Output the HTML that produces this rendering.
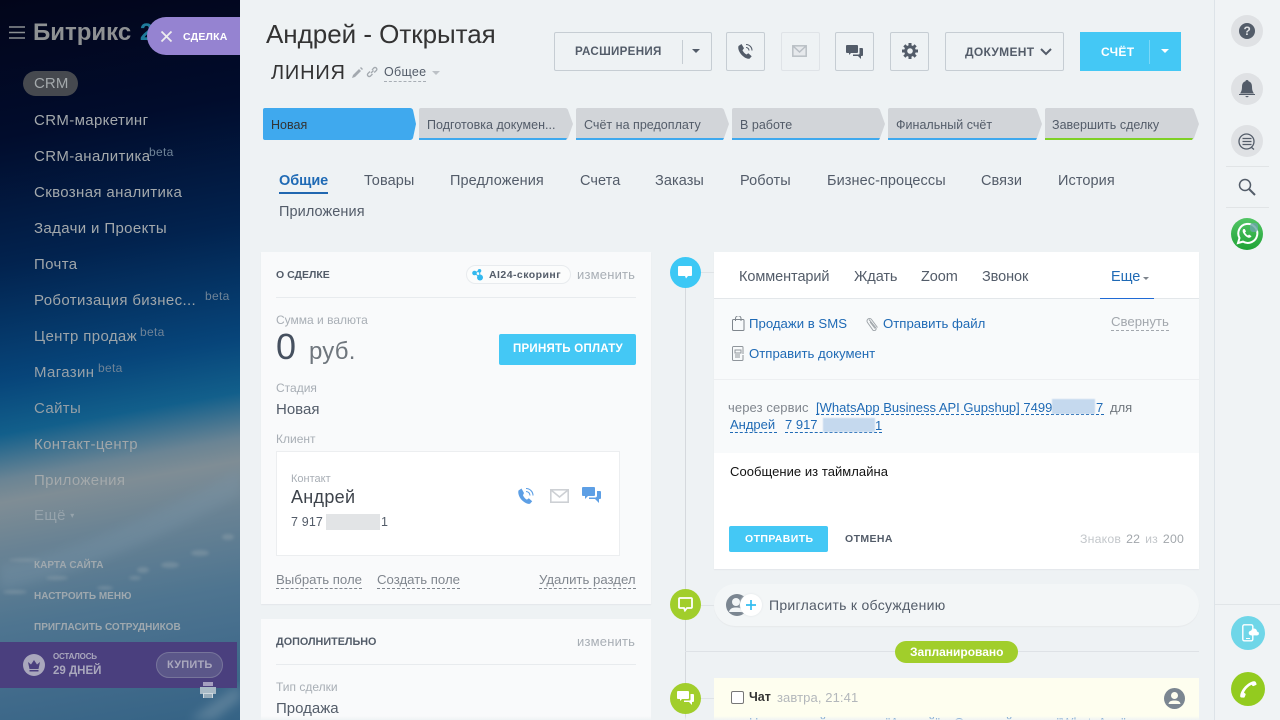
<!DOCTYPE html>
<html lang="ru"><head><meta charset="utf-8"><title>Сделка</title>
<style>
html,body{margin:0;padding:0;width:1280px;height:720px;overflow:hidden;background:#eef2f4;font-family:"Liberation Sans","DejaVu Sans",sans-serif}
*{box-sizing:border-box}
#w{position:absolute;left:0;top:0;width:1280px;height:720px;overflow:hidden;background:#eef2f4}
.a,.t{position:absolute;white-space:nowrap}
.t{line-height:1}
.side{position:absolute;left:0;top:0;width:240px;height:720px;overflow:hidden;background:linear-gradient(170deg,#02051a 0%,#010c2c 18%,#02234f 35%,#07457a 50%,#125f8b 57%,#6a8494 63%,#7f8d95 66%,#6a8394 72%,#4f7590 82%,#436c8c 90%,#356385 100%)}
.m{position:absolute;left:34px;font-size:15px;color:#a4a9ac;letter-spacing:.36px;line-height:18px;white-space:nowrap}
.b{position:absolute;font-size:12px;color:#6f8397;letter-spacing:.3px;line-height:14px}
.sm{position:absolute;left:34px;font-size:10px;font-weight:bold;color:#9fa8ae;letter-spacing:0;line-height:12px;white-space:nowrap}
.btn{position:absolute;top:32px;height:39px;border:1px solid #c6cdd3;border-radius:2px}
.stt{position:absolute;top:117px;font-size:12.5px;color:#535c69;letter-spacing:.02px;white-space:nowrap;line-height:16px}
.tab{position:absolute;font-size:14.5px;color:#535c69;line-height:18px;letter-spacing:.08px;white-space:nowrap}
.lab{position:absolute;font-size:12px;color:#a8aeb5;line-height:14px;white-space:nowrap}
.val{position:absolute;font-size:15px;color:#535c69;line-height:18px;white-space:nowrap}
.dash{position:absolute;font-size:13.2px;color:#80868e;line-height:15px;padding-bottom:1px;border-bottom:1px dashed #80868e;white-space:nowrap}
.lnk{position:absolute;font-size:13.2px;color:#1f6ab5;line-height:15px;white-space:nowrap}
.dl{border-bottom:1px dashed #1f6ab5;padding-bottom:0}
.r{position:absolute;left:1231px;width:32px;height:32px;border-radius:50%;background:#dfe1e4}
.dot{position:absolute;left:670px;width:31px;height:31px;border-radius:50%}
</style></head><body><div id="w">

<div class="side">
  <svg class="a" style="left:0;top:400px" width="240" height="320" viewBox="0 0 240 320">
    <defs><filter id="f"><feGaussianBlur stdDeviation="5"/></filter><filter id="g"><feGaussianBlur stdDeviation="1.500"/></filter></defs>
    <path d="M0 165 Q90 150 240 70 L240 95 Q100 170 0 190Z" fill="#7d98ab" opacity=".3" filter="url(#f)"/>
    <g fill="#a8b3b8" opacity=".3" filter="url(#g)">
      <ellipse cx="228" cy="137" rx="6" ry="3"/><ellipse cx="200" cy="153" rx="9" ry="3"/><ellipse cx="170" cy="165" rx="9" ry="3"/><ellipse cx="143" cy="170" rx="6" ry="3"/><ellipse cx="135" cy="178" rx="6" ry="2"/><ellipse cx="57" cy="178" rx="11" ry="2"/><ellipse cx="15" cy="192" rx="12" ry="2"/><ellipse cx="105" cy="188" rx="8" ry="2"/><ellipse cx="25" cy="160" rx="16" ry="1.500"/>
    </g>
    <path d="M190 320 Q215 300 240 285 L240 300 Q225 310 215 320Z" fill="#8ea6b5" opacity=".4" filter="url(#f)"/>
  </svg>
  <svg class="a" style="left:9px;top:26px" width="16" height="13"><path d="M0 1h16M0 6.500h16M0 12h16" stroke="#8b8f92" stroke-width="1.600"/></svg>
  <div class="t" style="left:33px;top:21px;font-size:24px;font-weight:bold;color:#8e9193">Битрикс <span style="color:#1e7b9b;margin-left:2px">24</span></div>
  <div class="a" style="left:23px;top:71px;width:55px;height:25px;border-radius:13px;background:#46494f"></div>
  <div class="m" style="top:75px;left:34px;letter-spacing:.1px">CRM</div>
  <div class="m" style="top:112px">CRM-маркетинг</div>
  <div class="m" style="top:148px">CRM-аналитика</div><div class="b" style="left:149px;top:145px">beta</div>
  <div class="m" style="top:184px">Сквозная аналитика</div>
  <div class="m" style="top:220px">Задачи и Проекты</div>
  <div class="m" style="top:256px;color:#a0a6aa">Почта</div>
  <div class="m" style="top:292px;color:#a0a6aa">Роботизация бизнес...</div><div class="b" style="left:205px;top:289px">beta</div>
  <div class="m" style="top:328px;color:#9ca4a9">Центр продаж</div><div class="b" style="left:140px;top:325px">beta</div>
  <div class="m" style="top:364px;color:#97a1a8">Магазин</div><div class="b" style="left:98px;top:361px">beta</div>
  <div class="m" style="top:400px;color:#949fa6">Сайты</div>
  <div class="m" style="top:436px;color:#a0a6a9">Контакт-центр</div>
  <div class="m" style="top:472px;color:#a4a9ab">Приложения</div>
  <div class="m" style="top:507px;color:#96a3ab">Ещё <span style="font-size:8px;vertical-align:2px">▾</span></div>
  <div class="sm" style="top:560px">КАРТА САЙТА</div>
  <div class="sm" style="top:591px">НАСТРОИТЬ МЕНЮ</div>
  <div class="sm" style="top:622px">ПРИГЛАСИТЬ СОТРУДНИКОВ</div>
  <div class="a" style="left:0;top:642px;width:237px;height:46px;background:#4a3f7e"></div>
  <div class="a" style="left:23px;top:654px;width:22px;height:22px;border-radius:50%;background:#a9a7bc"></div>
  <svg class="a" style="left:23px;top:654px" width="22" height="22"><path d="M5 8l3 2.500L11 6l3 4.500L17 8l-1.500 7h-9zM6.500 16h9v1.500h-9z" fill="#4a3f7e"/></svg>
  <div class="t" style="left:53px;top:653px;font-size:8px;font-weight:bold;color:#aaa8bd;letter-spacing:-.2px">ОСТАЛОСЬ</div>
  <div class="t" style="left:53px;top:666px;font-size:11.500px;font-weight:bold;color:#aaa8bd">29 ДНЕЙ</div>
  <div class="a" style="left:156px;top:652px;width:67px;height:26px;border:1px solid #77759b;border-radius:13px;background:#5b5789"></div>
  <div class="t" style="left:167px;top:660px;font-size:11px;font-weight:bold;color:#aaa8bd;letter-spacing:.2px">КУПИТЬ</div>
  <svg class="a" style="left:200px;top:682px" width="16" height="17"><path d="M3 0h10v4H3z" fill="#a59fc0"/><path d="M0 5h16v7H0z" fill="#a9bac6"/><path d="M3 11h10v5H3z" fill="#d0d9df"/><path d="M4 13h8M4 15h8" stroke="#5f7f96"/></svg>
</div>

<div class="a" style="left:147px;top:17px;width:93px;height:38px;background:#9583d1;border-radius:19px 0 0 19px"></div>
<svg class="a" style="left:160px;top:30px" width="13" height="13"><path d="M1.500 1.500l10 10M11.500 1.500l-10 10" stroke="#eee" stroke-width="1.800"/></svg>
<div class="t" style="left:183px;top:32px;font-size:10.500px;font-weight:bold;color:#fff;letter-spacing:.2px">СДЕЛКА</div>

<div class="t" style="left:266px;top:21px;font-size:26px;color:#333;letter-spacing:-.03px">Андрей - Открытая</div>
<div class="t" style="left:271px;top:63px;font-size:20px;color:#333;letter-spacing:.8px">ЛИНИЯ</div>
<svg class="a" style="left:352px;top:67px" width="11" height="11"><path d="M0 11l1-3 6-6 2 2-6 6zM8 1l1-1 2 2-1 1z" fill="#a3a9af"/></svg>
<svg class="a" style="left:366px;top:66px" width="12" height="12" fill="none" stroke="#a3a9af" stroke-width="1.300"><path d="M5 7l2.500-2.500M4 5.500L1.800 7.700a1.800 1.800 0 002.500 2.500L6.500 8M6 4l2-2.200a1.800 1.800 0 012.500 2.500L8.200 6.500"/></svg>
<div class="t" style="left:384px;top:66px;font-size:12.500px;color:#535c69;letter-spacing:.3px;padding-bottom:2px;border-bottom:1px dashed #a8aeb5">Общее</div>
<svg class="a" style="left:432px;top:71px" width="8" height="5"><path d="M0 0h8L4 4z" fill="#bcc1c6"/></svg>

<div class="btn" style="left:554px;width:158px"></div>
<div class="t" style="left:575px;top:46px;font-size:11.600px;font-weight:bold;color:#535c69;letter-spacing:.3px">РАСШИРЕНИЯ</div>
<div class="a" style="left:682px;top:40px;width:1px;height:24px;background:#c6cdd3"></div>
<svg class="a" style="left:692px;top:49px" width="8" height="5"><path d="M0 0h8L4 4z" fill="#535c69"/></svg>

<div class="btn" style="left:726px;width:39px"></div>
<svg class="a" style="left:737px;top:43px" width="17" height="17"><path d="M4.500 1L1.500 3c-.8 2.500.5 6 3 8.700 2.500 2.700 5.500 4.300 8 4l2.200-2.500-3.400-3-1.800 1.300c-1.500-.6-3.300-2.500-4-4.200L7 5.300z" fill="#535c69"/><path d="M9 1.500a6 6 0 016 6M9 4.500a3 3 0 013 3" fill="none" stroke="#535c69" stroke-width="1.100"/></svg>
<div class="btn" style="left:781px;width:39px;border-color:#dfe3e7"></div>
<svg class="a" style="left:792px;top:45px" width="15" height="12" fill="none" stroke="#b9bfc5" stroke-width="1.500"><rect x=".8" y=".8" width="13.400" height="10.400" fill="#e6e9ec"/><path d="M1 1l6.500 6L14 1"/></svg>
<div class="btn" style="left:835px;width:39px"></div>
<svg class="a" style="left:846px;top:45px" width="17" height="15" fill="#535c69"><path d="M1 0h10a1 1 0 011 1v6a1 1 0 01-1 1H5l-2 2V8H1a1 1 0 01-1-1V1a1 1 0 011-1z"/><path d="M13.500 3H16a1 1 0 011 1v6a1 1 0 01-1 1h-1v3l-3-3H7V9.500h5.500a1 1 0 001-1z"/></svg>
<div class="btn" style="left:890px;width:39px"></div>
<svg class="a" style="left:902px;top:43px" width="16" height="16" viewBox="0 0 16 16"><circle cx="8" cy="8" r="4.300" fill="none" stroke="#535c69" stroke-width="3"/><path d="M6.500 0h3v3h-3zM6.500 13h3v3h-3zM0 6.500h3v3H0zM13 6.500h3v3h-3z" fill="#535c69"/><path d="M6.500 0h3v3h-3zM6.500 13h3v3h-3zM0 6.500h3v3H0zM13 6.500h3v3h-3z" fill="#535c69" transform="rotate(45 8 8)"/></svg>
<div class="btn" style="left:945px;width:119px"></div>
<div class="t" style="left:965px;top:46px;font-size:12px;font-weight:bold;color:#535c69;letter-spacing:.3px">ДОКУМЕНТ</div>
<svg class="a" style="left:1040px;top:48px" width="12" height="8" fill="none" stroke="#535c69" stroke-width="2"><path d="M1 1l5 5 5-5"/></svg>
<div class="a" style="left:1080px;top:32px;width:101px;height:39px;background:#44c8f5"></div>
<div class="t" style="left:1101px;top:46px;font-size:12px;font-weight:bold;color:#fff;letter-spacing:.3px">СЧЁТ</div>
<div class="a" style="left:1149px;top:40px;width:1px;height:24px;background:#7bd8f8"></div>
<svg class="a" style="left:1161px;top:49px" width="8" height="5"><path d="M0 0h8L4 4z" fill="#fff"/></svg>

<svg class="a" style="left:263px;top:108px" width="940" height="32">
  <path d="M2 0H147q2 0 3 2L153 16l-3 14q-1 2-3 2H2q-2 0-2-2V2q0-2 2-2z" fill="#3fa9ee"/>
  <path d="M156 2q0-2 2-2h144q2 0 3 2l5 14-5 14q-1 2-3 2H156z" fill="#d2d5d9"/><path d="M156 30h148l-1 2H156z" fill="#3fa9ee"/>
  <path d="M313 2q0-2 2-2h143q2 0 3 2l5 14-5 14q-1 2-3 2H313z" fill="#d2d5d9"/><path d="M313 30h148l-1 2H313z" fill="#3fa9ee"/>
  <path d="M469 2q0-2 2-2h143q2 0 3 2l5 14-5 14q-1 2-3 2H469z" fill="#d2d5d9"/><path d="M469 30h148l-1 2H469z" fill="#3fa9ee"/>
  <path d="M625 2q0-2 2-2h144q2 0 3 2l5 14-5 14q-1 2-3 2H625z" fill="#d2d5d9"/><path d="M625 30h149l-1 2H625z" fill="#3fa9ee"/>
  <path d="M782 2q0-2 2-2h144q2 0 3 2l5 14-5 14q-1 2-3 2H782z" fill="#d2d5d9"/><path d="M782 30h148l-1 2H782z" fill="#7fd026"/>
</svg>
<div class="stt" style="left:271px;color:#333">Новая</div>
<div class="stt" style="left:427px">Подготовка докумен...</div>
<div class="stt" style="left:584px">Счёт на предоплату</div>
<div class="stt" style="left:740px">В работе</div>
<div class="stt" style="left:896px">Финальный счёт</div>
<div class="stt" style="left:1052px">Завершить сделку</div>

<div class="tab" style="left:279px;top:172px;color:#1f6ab5;font-weight:bold;letter-spacing:-.05px">Общие</div>
<div class="a" style="left:279px;top:192px;width:49px;height:2px;background:#2067b0"></div>
<div class="tab" style="left:364px;top:172px">Товары</div>
<div class="tab" style="left:450px;top:172px">Предложения</div>
<div class="tab" style="left:580px;top:172px">Счета</div>
<div class="tab" style="left:655px;top:172px">Заказы</div>
<div class="tab" style="left:740px;top:172px">Роботы</div>
<div class="tab" style="left:827px;top:172px">Бизнес-процессы</div>
<div class="tab" style="left:981px;top:172px">Связи</div>
<div class="tab" style="left:1058px;top:172px">История</div>
<div class="tab" style="left:279px;top:203px">Приложения</div>

<!-- left card -->
<div class="a" style="left:261px;top:252px;width:390px;height:352px;background:#f9fafb;box-shadow:0 1px 1px #e3e6e9"></div>
<div class="t" style="left:276px;top:270px;font-size:10.500px;font-weight:bold;color:#535c69">О СДЕЛКЕ</div>
<div class="a" style="left:466px;top:265px;width:105px;height:19px;border:1px solid #e8ebee;border-radius:10px;background:#fbfcfc"></div>
<svg class="a" style="left:472px;top:269px" width="12" height="12" fill="#33b8ee"><circle cx="2.500" cy="4" r="2.300"/><circle cx="7.500" cy="1.800" r="1.800"/><circle cx="8" cy="8.500" r="3"/><path d="M2.500 4l5-2.200L8 8.500z" stroke="#33b8ee" fill="none"/></svg>
<div class="t" style="left:489px;top:270px;font-size:10.500px;font-weight:bold;color:#535c69;letter-spacing:.45px">AI24-скоринг</div>
<div class="t" style="left:577px;top:268px;font-size:13px;color:#a8aeb5;letter-spacing:.2px">изменить</div>
<div class="a" style="left:276px;top:297px;width:360px;height:1px;background:#e8ebee"></div>
<div class="lab" style="left:276px;top:313px">Сумма и валюта</div>
<div class="t" style="left:276px;top:329px;font-size:36px;color:#46505f">0</div>
<div class="t" style="left:309px;top:340px;font-size:24px;color:#6f767d;letter-spacing:.2px">руб.</div>
<div class="a" style="left:499px;top:334px;width:137px;height:31px;background:#44c8f5;border-radius:2px"></div>
<div class="t" style="left:513px;top:344px;font-size:11.500px;font-weight:bold;color:#fff;letter-spacing:.25px">ПРИНЯТЬ ОПЛАТУ</div>
<div class="lab" style="left:276px;top:381px">Стадия</div>
<div class="val" style="left:276px;top:401px">Новая</div>
<div class="lab" style="left:276px;top:432px">Клиент</div>
<div class="a" style="left:276px;top:451px;width:344px;height:105px;background:#fff;border:1px solid #eceef0"></div>
<div class="t" style="left:291px;top:474px;font-size:11px;color:#a8aeb5">Контакт</div>
<div class="t" style="left:291px;top:488px;font-size:18px;color:#3d434b;letter-spacing:.3px">Андрей</div>
<div class="t" style="left:291px;top:516px;font-size:12.500px;color:#535c69;letter-spacing:.15px">7 917</div>
<div class="a" style="left:326px;top:514px;width:54px;height:16px;background:#e2e4e6"></div>
<div class="t" style="left:381px;top:516px;font-size:12.500px;color:#535c69">1</div>
<svg class="a" style="left:517px;top:487px" width="18" height="18"><path d="M4.500 1.500L1.500 3.500c-.8 2.500.5 6.500 3 9.200 2.500 2.700 6 4.500 8.500 4.100l2.200-2.500-3.400-3-1.800 1.300c-1.500-.6-3.300-2.700-4-4.400L7 6z" fill="#5d9fe5"/><path d="M9 1.500a7 7 0 017 7M9 4.500a4 4 0 014 4" fill="none" stroke="#5d9fe5" stroke-width="1.100"/></svg>
<svg class="a" style="left:550px;top:489px" width="19" height="14" fill="none" stroke="#cdd0d4" stroke-width="1.600"><rect x=".8" y=".8" width="17.400" height="12.400"/><path d="M1 1l8.500 7L18 1"/></svg>
<svg class="a" style="left:582px;top:487px" width="20" height="18" fill="#5d9fe5"><path d="M1 0h11a1 1 0 011 1v7a1 1 0 01-1 1H6l-3 3V9H1a1 1 0 01-1-1V1a1 1 0 011-1z"/><path d="M15 4h3a1 1 0 011 1v6a1 1 0 01-1 1h-1v4l-4-4H7v-1.500h6a2 2 0 002-2z"/></svg>
<div class="dash" style="left:276px;top:572px">Выбрать поле</div>
<div class="dash" style="left:377px;top:572px">Создать поле</div>
<div class="dash" style="left:539px;top:572px">Удалить раздел</div>

<div class="a" style="left:261px;top:619px;width:390px;height:101px;background:#f9fafb"></div>
<div class="t" style="left:276px;top:637px;font-size:10.800px;font-weight:bold;color:#535c69">ДОПОЛНИТЕЛЬНО</div>
<div class="t" style="left:577px;top:635px;font-size:13px;color:#a8aeb5;letter-spacing:.2px">изменить</div>
<div class="a" style="left:276px;top:664px;width:360px;height:1px;background:#e8ebee"></div>
<div class="lab" style="left:276px;top:680px">Тип сделки</div>
<div class="val" style="left:276px;top:700px">Продажа</div>

<!-- timeline -->
<div class="a" style="left:685px;top:270px;width:1px;height:450px;background:#d5d9dd"></div>
<div class="a" style="left:700px;top:272px;width:14px;height:1px;background:#dfe3e6"></div>
<div class="dot" style="top:257px;background:#3cc8f5"></div>
<svg class="a" style="left:678px;top:266px" width="15" height="14"><path d="M1 0h12a1 1 0 011 1v8a1 1 0 01-1 1h-3l-2 2.500L7 10H1a1 1 0 01-1-1V1a1 1 0 011-1z" fill="#fff"/></svg>

<div class="a" style="left:714px;top:252px;width:485px;height:317px;background:#fff;box-shadow:0 1px 1px #e3e6e9"></div>
<div class="a" style="left:714px;top:298px;width:485px;height:155px;background:#f8fafb;border-top:1px solid #e3e7ea"></div>
<div class="a" style="left:714px;top:379px;width:485px;height:1px;background:#edeff1"></div>
<div class="tab" style="left:739px;top:268px;letter-spacing:-.08px">Комментарий</div>
<div class="tab" style="left:854px;top:268px;letter-spacing:-.08px">Ждать</div>
<div class="tab" style="left:921px;top:268px;letter-spacing:-.08px">Zoom</div>
<div class="tab" style="left:982px;top:268px;letter-spacing:-.08px">Звонок</div>
<div class="tab" style="left:1111px;top:268px;color:#1f6ab5;letter-spacing:-.08px">Еще</div>
<svg class="a" style="left:1143px;top:277px" width="6" height="4"><path d="M0 0h6L3 3z" fill="#7d848c"/></svg>
<div class="a" style="left:1100px;top:298px;width:54px;height:1px;background:#1f6ad5"></div>

<svg class="a" style="left:732px;top:316px" width="13" height="15" fill="none" stroke="#7f868d"><rect x=".5" y="3.500" width="11.500" height="11" rx="1"/><path d="M3.500 5V2.500a2.500 2.500 0 015.500 0V5"/></svg>
<div class="lnk" style="left:749px;top:316px">Продажи в SMS</div>
<svg class="a" style="left:866px;top:316px" width="13" height="15" fill="none" stroke="#a0a6ab"><path d="M3 3.500l7 8.500a2 2 0 01-3 2.300L1.500 6.500a2.500 2.500 0 014-3l6 8"/><path d="M4 6l5 6.500"/></svg>
<div class="lnk" style="left:883px;top:316px">Отправить файл</div>
<div class="dash" style="left:1111px;top:314px;color:#a2a7ad;border-color:#a2a7ad">Свернуть</div>
<svg class="a" style="left:732px;top:346px" width="13" height="15" fill="none" stroke="#8f959b"><path d="M11 9v4.500a1 1 0 01-1 1H1.500a1 1 0 01-1-1v-12a1 1 0 011-1H10a1 1 0 011 1V8"/><path d="M3 4h6v3H3zM3 9h5M3 11h5" /></svg>
<div class="lnk" style="left:749px;top:346px">Отправить документ</div>

<div class="t" style="left:728px;top:401px;font-size:13px;color:#80868e;letter-spacing:.1px">через сервис</div>
<div class="lnk dl" style="left:816px;top:400px;width:288px;font-size:13px;height:15px">[WhatsApp Business API Gupshup] 7499</div>
<div class="a" style="left:1052px;top:399px;width:43px;height:15px;background:#c5d9ee;filter:blur(.5px)"></div>
<div class="t" style="left:1096px;top:401px;font-size:13px;color:#1f6ab5">7</div>
<div class="t" style="left:1110px;top:401px;font-size:13px;color:#6f767d">для</div>
<div class="lnk dl" style="left:730px;top:417px;width:47px;height:16px;font-size:13px">Андрей</div>
<div class="lnk dl" style="left:785px;top:417px;width:97px;height:16px;font-size:13px">7 917</div>
<div class="a" style="left:823px;top:418px;width:52px;height:14px;background:#c5d9ee;filter:blur(.5px)"></div>
<div class="t" style="left:875px;top:419px;font-size:13px;color:#1f6ab5">1</div>

<div class="t" style="left:730px;top:465px;font-size:13px;color:#111;letter-spacing:.05px">Сообщение из таймлайна</div>
<div class="a" style="left:729px;top:526px;width:99px;height:26px;background:#44c8f5;border-radius:2px"></div>
<div class="t" style="left:745px;top:534px;font-size:10.500px;font-weight:bold;color:#fff;letter-spacing:.4px">ОТПРАВИТЬ</div>
<div class="t" style="left:845px;top:534px;font-size:10.500px;font-weight:bold;color:#535c69;letter-spacing:.4px">ОТМЕНА</div>
<div class="t" style="left:1080px;top:533px;font-size:12.300px;color:#c3c7cb;letter-spacing:.2px;word-spacing:1.300px">Знаков <span style="color:#a2a7ac">22</span> из <span style="color:#a2a7ac">200</span></div>

<div class="a" style="left:700px;top:605px;width:14px;height:1px;background:#dfe3e6"></div>
<div class="dot" style="top:589px;background:#a1ce2b"></div>
<svg class="a" style="left:678px;top:597px" width="15" height="15"><path d="M2 1h11a1 1 0 011 1v8a1 1 0 01-1 1H9l-2 2.500L6 11H2a1 1 0 01-1-1V2a1 1 0 011-1z" fill="none" stroke="#fff" stroke-width="1.800"/></svg>
<div class="a" style="left:714px;top:584px;width:485px;height:42px;background:#f3f6f7;border-radius:21px;box-shadow:0 1px 1px #e6e9eb"></div>
<div class="a" style="left:726px;top:594px;width:22px;height:22px;border-radius:50%;background:#7b8691"></div>
<svg class="a" style="left:726px;top:594px" width="22" height="22"><circle cx="10" cy="8" r="4" fill="#f3f6f7"/><path d="M3 18c1-4 4-4.500 7-4.500s6 .5 7 4.500z" fill="#f3f6f7"/></svg>
<div class="a" style="left:740px;top:594px;width:22px;height:22px;border-radius:50%;background:#fff;box-shadow:0 0 2px #dfe3e6"></div>
<svg class="a" style="left:745px;top:599px" width="12" height="12"><path d="M6 1v10M1 6h10" stroke="#33bdf0" stroke-width="1.700"/></svg>
<div class="t" style="left:769px;top:598px;font-size:14px;color:#535c69;letter-spacing:.28px">Пригласить к обсуждению</div>

<div class="a" style="left:685px;top:651px;width:514px;height:1px;background:#dee2e6"></div>
<div class="a" style="left:895px;top:641px;width:123px;height:22px;border-radius:11px;background:#a1ce2b"></div>
<div class="t" style="left:910px;top:646px;font-size:12px;font-weight:bold;color:#fff">Запланировано</div>

<div class="a" style="left:700px;top:698px;width:14px;height:1px;background:#dfe3e6"></div>
<div class="dot" style="top:683px;background:#a1ce2b"></div>
<svg class="a" style="left:677px;top:691px" width="17" height="15" fill="#fff"><path d="M1 0h10a1 1 0 011 1v6a1 1 0 01-1 1H5l-2 2V8H1a1 1 0 01-1-1V1a1 1 0 011-1z"/><path d="M13.500 3H16a1 1 0 011 1v6a1 1 0 01-1 1h-1v3l-3-3H7V9.500h5.500a1 1 0 001-1z"/></svg>
<div class="a" style="left:714px;top:678px;width:485px;height:42px;background:#fefeef"></div>
<div class="a" style="left:731px;top:691px;width:13px;height:13px;border:1px solid #777;border-radius:2px;background:#fff"></div>
<div class="t" style="left:749px;top:691px;font-size:12.500px;font-weight:bold;color:#333">Чат</div>
<div class="t" style="left:777px;top:691px;font-size:13px;color:#b3b7bb;letter-spacing:.1px">завтра, 21:41</div>
<div class="a" style="left:1164px;top:688px;width:21px;height:21px;border-radius:50%;background:#7b8691"></div>
<svg class="a" style="left:1164px;top:688px" width="21" height="21"><circle cx="10.500" cy="7.500" r="3.500" fill="#fefeef"/><path d="M4.500 16c.5-3 3-3.500 6-3.500s5.500.5 6 3.500z" fill="#fefeef"/></svg>
<div class="t" style="left:749px;top:716px;font-size:13px;color:#1f6ab5">Начат новый диалог с "Андрей" в Открытой линии "WhatsApp"</div>
<div class="a" style="left:240px;top:716px;width:975px;height:4px;background:linear-gradient(rgba(238,242,244,0),rgba(238,242,244,.9))"></div>

<!-- right rail -->
<div class="a" style="left:1214px;top:0;width:66px;height:720px;background:#f0f3f5;border-left:1px solid #dde3e8"></div>
<div class="a" style="left:1215px;top:604px;width:65px;height:1px;background:#e1e5e8"></div>
<div class="a" style="left:1226px;top:166px;width:43px;height:1px;background:#e1e4e6"></div>
<div class="a" style="left:1226px;top:207px;width:43px;height:1px;background:#e1e4e6"></div>
<div class="r" style="top:15px"></div>
<div class="a" style="left:1239px;top:23px;width:16px;height:16px;border-radius:50%;background:#535c69"></div>
<div class="t" style="left:1243.500px;top:25px;font-size:12px;font-weight:bold;color:#dfe1e4">?</div>
<div class="r" style="top:73px"></div>
<svg class="a" style="left:1239px;top:80px" width="16" height="18" fill="#535c69"><path d="M8 0c1 0 1.500.6 1.500 1.300C12 2 13 4 13 7c0 3 .8 5 2 6.500H1C2.200 12 3 10 3 7c0-3 1-5 3.500-5.700C6.500.6 7 0 8 0z"/><path d="M0 14h16v1H0zM6 16h4l-2 1.500z"/></svg>
<div class="r" style="top:125px"></div>
<svg class="a" style="left:1238px;top:133px" width="18" height="17" fill="none" stroke="#535c69" stroke-width="1.300"><circle cx="8.500" cy="8.500" r="7.500"/><path d="M13 14l3 2.500M4.500 5.500h9M4.500 8.500h9M4.500 11.500h9"/></svg>
<svg class="a" style="left:1238px;top:178px" width="18" height="18" fill="none" stroke="#535c69" stroke-width="1.500"><circle cx="7" cy="7" r="5.500"/><path d="M11 11l6 6" stroke-width="2"/></svg>
<div class="a" style="left:1231px;top:218px;width:32px;height:32px;border-radius:50%;background:linear-gradient(#52c565,#20a336)"></div>
<svg class="a" style="left:1235px;top:222px" width="24" height="24" fill="none"><path d="M3 21l1.500-5A9.500 9.500 0 1 1 8 19.600z" stroke="#fff" stroke-width="2"/><path d="M8.500 7c-1 1-1.200 2.500 0 4.500 1.300 2.200 3.200 3.700 5 4.200 1.300.3 2.600-.5 3-1.600l-2.500-1.600-1 1c-1.200-.5-2.500-1.800-3-3l1-1L9.800 7z" fill="#fff"/></svg>
<div class="a" style="left:1250px;top:223px;width:8px;height:9px;border-radius:3px;background:#6aa6a8;opacity:.8"></div>
<div class="a" style="left:1231px;top:616px;width:34px;height:34px;border-radius:50%;background:#6fd6e8"></div>
<svg class="a" style="left:1242px;top:624px" width="18" height="18"><rect x=".8" y=".8" width="10" height="16" rx="1.500" fill="none" stroke="#fff" stroke-width="1.400"/><path d="M4 14.500h4" stroke="#fff"/><g fill="#fff"><circle cx="9" cy="9" r="2.300"/><circle cx="12" cy="7.500" r="3"/><circle cx="15" cy="9.500" r="1.900"/><rect x="9" y="8.500" width="6" height="2.900"/></g></svg>
<div class="a" style="left:1231px;top:672px;width:34px;height:34px;border-radius:50%;background:#93cb1f"></div>
<svg class="a" style="left:1240px;top:681px" width="17" height="17"><path d="M1.200 16.500c-.8-.3-1.200-1-1-2C1 8.500 7.500 1.500 13.500.3c.9-.2 1.800 0 2.300.8l.7 1.600c.2.600 0 1-.5 1.300l-2.300 1c-.5.200-1 .1-1.300-.3l-.7-1C8.500 5 5 8.700 4 11.800l1.200.7c.4.300.5.700.4 1.200l-.9 2.300c-.2.500-.7.700-1.200.6z" fill="#fff"/></svg>

</div></body></html>
